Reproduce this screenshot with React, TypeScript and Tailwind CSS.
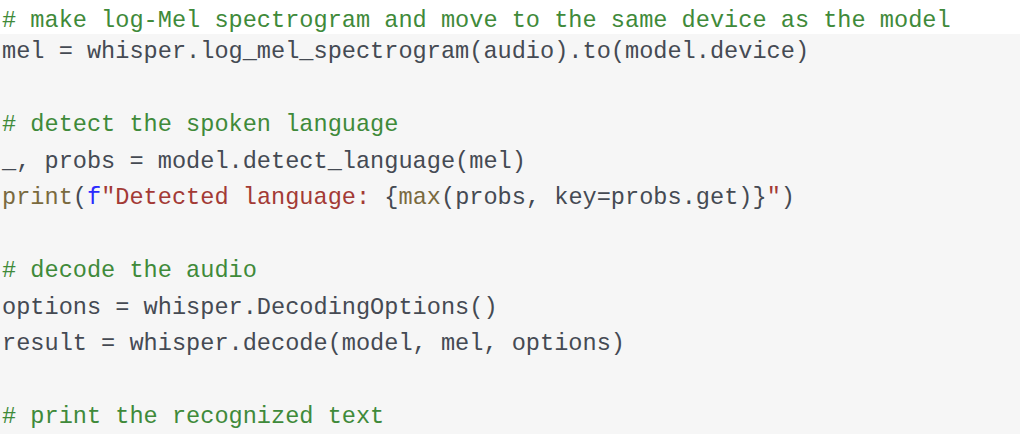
import React from "react";

const C = ({ children }: { children: React.ReactNode }) => (
  <span className="text-[#3f8a3a]">{children}</span>
);
const B = ({ children }: { children: React.ReactNode }) => (
  <span className="text-[#7a6a3e]">{children}</span>
);
const S = ({ children }: { children: React.ReactNode }) => (
  <span className="text-[#a33a35]">{children}</span>
);
const K = ({ children }: { children: React.ReactNode }) => (
  <span className="text-[#2a2aff]">{children}</span>
);

export default function App() {
  return (
    <div
      className="w-[1024px] h-[440px] bg-white text-[#454a53] text-[23.6px] leading-[36.5px] whitespace-pre overflow-hidden"
      style={{ fontFamily: '"Courier New", "Liberation Mono", monospace' }}
    >
      <div className="h-[37px] pt-[3.4px] pl-[2px]">
        <C># make log-Mel spectrogram and move to the same device as the model</C>
      </div>
      <div className="w-[1020px] h-[400px] bg-[#f6f6f6] pl-[2px]">
        <div className="-mt-[2.6px]">
          <div>mel = whisper.log_mel_spectrogram(audio).to(model.device)</div>
          <div>&nbsp;</div>
          <div>
            <C># detect the spoken language</C>
          </div>
          <div>_, probs = model.detect_language(mel)</div>
          <div>
            <B>print</B>(<K>f</K>
            <S>"Detected language: </S>
            {"{"}
            <B>max</B>(probs, key=probs.get){"}"}
            <S>"</S>)
          </div>
          <div>&nbsp;</div>
          <div>
            <C># decode the audio</C>
          </div>
          <div>options = whisper.DecodingOptions()</div>
          <div>result = whisper.decode(model, mel, options)</div>
          <div>&nbsp;</div>
          <div>
            <C># print the recognized text</C>
          </div>
        </div>
      </div>
    </div>
  );
}
